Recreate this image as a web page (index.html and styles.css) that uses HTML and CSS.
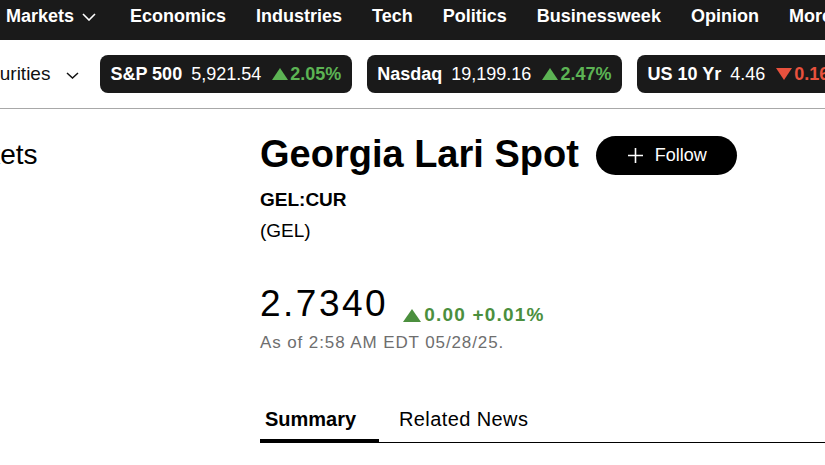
FILE: index.html
```html
<!DOCTYPE html>
<html>
<head>
    <meta charset='utf-8'>
    <title>Georgia Lari Spot</title>
    <link rel="stylesheet" href="styles.css">
</head>
<body>
    <div class='topnav'>
        <div class='nav-item'>Markets
            <svg class='chevron' width='14' height='8' viewBox='0 0 14 8'><path d='M1 1l6 6 6-6' fill='none' stroke='#fff' stroke-width='1.6'/></svg>
        </div>
        <div class='nav-item'>Economics</div>
        <div class='nav-item'>Industries</div>
        <div class='nav-item'>Tech</div>
        <div class='nav-item'>Politics</div>
        <div class='nav-item'>Businessweek</div>
        <div class='nav-item'>Opinion</div>
        <div class='nav-item'>More</div>
    </div>

    <div class='ticker-bar'>
        <div class='sector'>Securities
            <svg class='chevron' width='13' height='7' viewBox='0 0 13 7'><path d='M1 1l5.5 5 5.5-5' fill='none' stroke='#111' stroke-width='1.5'/></svg>
        </div>
        <div class='ticker'>
            <span class='name'>S&amp;P 500</span>
            <span class='val'>5,921.54</span>
            <span class='chg up'><svg width='16' height='12' viewBox='0 0 16 12'><path d='M8 0L16 12H0z' fill='#5cb354'/></svg>2.05%</span>
        </div>
        <div class='ticker'>
            <span class='name'>Nasdaq</span>
            <span class='val'>19,199.16</span>
            <span class='chg up'><svg width='16' height='12' viewBox='0 0 16 12'><path d='M8 0L16 12H0z' fill='#5cb354'/></svg>2.47%</span>
        </div>
        <div class='ticker'>
            <span class='name'>US 10 Yr</span>
            <span class='val'>4.46</span>
            <span class='chg down'><svg width='16' height='12' viewBox='0 0 16 12'><path d='M0 0H16L8 12z' fill='#e8513d'/></svg>0.16%</span>
        </div>
    </div>

    <div class='page'>
        <aside class='sidebar'>
            <h2>Markets</h2>
        </aside>
        <main class='quote'>
            <div class='title-row'>
                <h1>Georgia Lari Spot</h1>
                <div class='follow'>
                    <svg width='15' height='15' viewBox='0 0 15 15'><path d='M7.5 0v15M0 7.5h15' stroke='#fff' stroke-width='1.6'/></svg>
                    Follow
                </div>
            </div>
            <div class='ticker-id'>GEL:CUR</div>
            <div class='currency'>(GEL)</div>
            <div class='price-row'>
                <span class='price'>2.7340</span>
                <span class='change'><svg width='18' height='13' viewBox='0 0 18 13'><path d='M9 0L18 13H0z' fill='#4b8f3e'/></svg>0.00 +0.01%</span>
            </div>
            <div class='asof'>As of 2:58 AM EDT 05/28/25.</div>
            <div class='tabs'>
                <div class='tab active'>Summary</div>
                <div class='tab'>Related News</div>
            </div>
        </main>
    </div>
</body>
</html>
```

FILE: styles.css
```css
body {
    margin: 0;
    padding: 0;
    width: 825px;
    height: 465px;
    overflow: hidden;
    font-family: "Liberation Sans", Arial, sans-serif;
    color: #000;
    background: #fff;
}
.topnav {
    display: flex;
    gap: 30px;
    height: 40px;
    box-sizing: border-box;
    padding: 6px 0 0 6px;
    background-color: #1a1a1a;
    white-space: nowrap;
    overflow: hidden;
}
.nav-item {
    display: flex;
    align-items: center;
    height: 20px;
    line-height: 20px;
    font-size: 18px;
    font-weight: bold;
    color: #fff;
    flex-shrink: 0;
}
.nav-item .chevron {
    margin-left: 8px;
    margin-right: 4px;
    margin-top: 1px;
}
.ticker-bar {
    display: flex;
    align-items: center;
    height: 68px;
    border-bottom: 1px solid #a8a8a8;
    white-space: nowrap;
    overflow: hidden;
}
.sector {
    display: flex;
    align-items: center;
    flex-shrink: 0;
    margin-left: -33px;
    margin-right: 21px;
    font-size: 19px;
    color: #111;
}
.sector .chevron {
    margin-left: 16px;
    margin-top: 2px;
}
.ticker {
    display: flex;
    align-items: center;
    flex-shrink: 0;
    height: 38px;
    padding: 0 11px 0 10px;
    margin-right: 15px;
    border-radius: 8px;
    background-color: #1a1a1a;
    color: #fff;
    font-size: 18px;
}
.ticker .name {
    font-weight: bold;
}
.ticker .val {
    margin-left: 9px;
}
.ticker .chg {
    display: flex;
    align-items: center;
    margin-left: 11px;
    font-weight: bold;
}
.ticker .chg svg {
    margin-right: 2px;
}
.ticker .up {
    color: #5cb354;
}
.ticker .down {
    color: #e8513d;
}
.page {
    display: flex;
}
.sidebar {
    width: 260px;
    flex-shrink: 0;
    overflow: hidden;
}
.sidebar h2 {
    margin: 29px 0 0 -62px;
    font-size: 28px;
    line-height: 34px;
    font-weight: normal;
}
.quote {
    flex: 1;
    min-width: 0;
    padding-top: 23px;
}
.title-row {
    display: flex;
    align-items: center;
    gap: 17px;
}
.title-row h1 {
    margin: 0;
    font-size: 38px;
    line-height: 44px;
    font-weight: bold;
    white-space: nowrap;
}
.follow {
    display: flex;
    align-items: center;
    gap: 12px;
    height: 39px;
    padding: 0 30px 0 32px;
    margin-top: 3px;
    border-radius: 20px;
    background-color: #000;
    color: #fff;
    font-size: 18px;
    cursor: pointer;
}
.ticker-id {
    margin-top: 12px;
    font-size: 19px;
    line-height: 24px;
    font-weight: bold;
}
.currency {
    margin-top: 7px;
    font-size: 19px;
    line-height: 24px;
}
.price-row {
    display: flex;
    align-items: flex-end;
    margin-top: 39px;
}
.price {
    font-size: 37px;
    line-height: 44px;
    letter-spacing: 2.5px;
}
.change {
    display: flex;
    align-items: center;
    margin-left: 15px;
    font-size: 19px;
    line-height: 22px;
    font-weight: bold;
    letter-spacing: 1.2px;
    color: #4b8f3e;
}
.change svg {
    margin-right: 3px;
}
.asof {
    margin-top: 7px;
    font-size: 17px;
    line-height: 20px;
    letter-spacing: 0.9px;
    color: #6e6e6e;
}
.tabs {
    display: flex;
    margin-top: 54px;
    border-bottom: 1px solid #000;
}
.tab {
    padding: 0 0 8px 20px;
    font-size: 20px;
    line-height: 24px;
    letter-spacing: 0.4px;
    white-space: nowrap;
}
.tab.active {
    width: 98px;
    padding: 0 16px 8px 5px;
    margin-bottom: -1px;
    border-bottom: 4px solid #000;
    font-weight: bold;
    letter-spacing: 0;
}
```
